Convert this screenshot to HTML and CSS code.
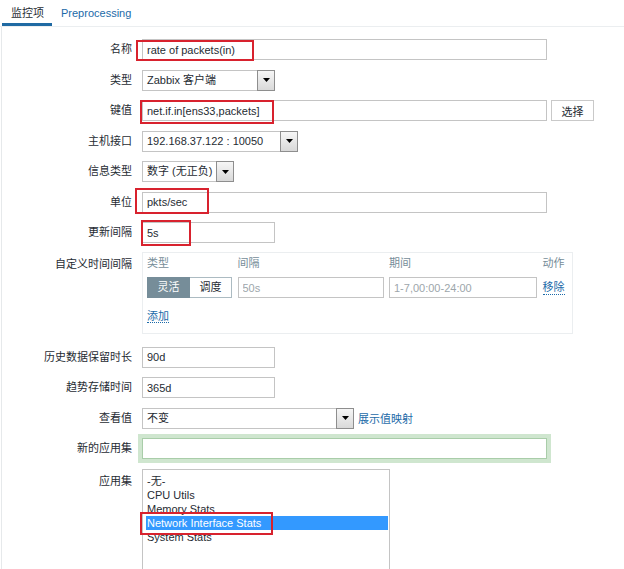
FILE: index.html
```html
<!DOCTYPE html>
<html lang="zh">
<head>
<meta charset="utf-8">
<title>监控项</title>
<link rel="stylesheet" href="styles.css">
</head>
<body>
<div class="tabs">
  <span class="tab active">监控项</span>
  <span class="tab">Preprocessing</span>
</div>
<div class="page">
  <div class="form">
    <label class="lbl">名称</label>
    <div class="field">
      <input class="text w-wide" value="rate of packets(in)">
      <span class="mark m-name"></span>
    </div>

    <label class="lbl">类型</label>
    <div class="field">
      <div class="select s-type"><span class="val">Zabbix 客户端</span><span class="arrow"><svg width="7" height="4" viewBox="0 0 7 4"><path d="M0 0h7L3.5 4z"/></svg></span></div>
    </div>

    <label class="lbl">键值</label>
    <div class="field">
      <input class="text w-wide" value="net.if.in[ens33,packets]">
      <button class="btn">选择</button>
      <span class="mark m-key"></span>
    </div>

    <label class="lbl">主机接口</label>
    <div class="field">
      <div class="select s-iface"><span class="val">192.168.37.122 : 10050</span><span class="arrow"><svg width="7" height="4" viewBox="0 0 7 4"><path d="M0 0h7L3.5 4z"/></svg></span></div>
    </div>

    <label class="lbl">信息类型</label>
    <div class="field">
      <div class="select s-info"><span class="val">数字 (无正负)</span><span class="arrow"><svg width="7" height="4" viewBox="0 0 7 4"><path d="M0 0h7L3.5 4z"/></svg></span></div>
    </div>

    <label class="lbl">单位</label>
    <div class="field">
      <input class="text w-wide" value="pkts/sec">
      <span class="mark m-unit"></span>
    </div>

    <label class="lbl">更新间隔</label>
    <div class="field">
      <input class="text w-short" value="5s">
      <span class="mark m-delay"></span>
    </div>

    <label class="lbl lbl-top">自定义时间间隔</label>
    <div class="field">
      <div class="intervals">
        <div class="iv-grid iv-head">
          <span>类型</span><span>间隔</span><span>期间</span><span>动作</span>
        </div>
        <div class="iv-grid iv-row">
          <div class="seg"><span class="seg-on">灵活</span><span class="seg-off">调度</span></div>
          <input class="text iv-int" placeholder="50s">
          <input class="text iv-per" placeholder="1-7,00:00-24:00">
          <a class="link">移除</a>
        </div>
        <div class="iv-add"><a class="link">添加</a></div>
      </div>
    </div>

    <label class="lbl">历史数据保留时长</label>
    <div class="field">
      <input class="text w-short" value="90d">
    </div>

    <label class="lbl">趋势存储时间</label>
    <div class="field">
      <input class="text w-short" value="365d">
    </div>

    <label class="lbl">查看值</label>
    <div class="field">
      <div class="select s-view"><span class="val">不变</span><span class="arrow"><svg width="7" height="4" viewBox="0 0 7 4"><path d="M0 0h7L3.5 4z"/></svg></span></div>
      <a class="plain-link">展示值映射</a>
    </div>

    <label class="lbl">新的应用集</label>
    <div class="field">
      <input class="text w-wide focus" value="">
    </div>

    <label class="lbl lbl-list">应用集</label>
    <div class="field">
      <div class="listbox">
        <div class="opt">-无-</div>
        <div class="opt">CPU Utils</div>
        <div class="opt">Memory Stats</div>
        <div class="opt sel">Network Interface Stats</div>
        <div class="opt">System Stats</div>
      </div>
      <span class="mark m-app"></span>
    </div>
  </div>
</div>
</body>
</html>
```
FILE: styles.css
```css
html, body {
  margin: 0;
  padding: 0;
  background: #fff;
}
body {
  font: 11px "Liberation Sans", Arial, "Noto Sans CJK SC", sans-serif;
  color: #1f2c33;
  overflow: hidden;
}

/* tabs */
.tabs {
  display: flex;
  padding-left: 2px;
  border-bottom: 1px solid #ebeef0;
}
.tab {
  padding: 6px 8px 3px 9px;
  line-height: 14px;
  border-bottom: 3px solid transparent;
  color: #1c6aa8;
}
.tab.active {
  color: #1f2c33;
  border-bottom-color: #1f6aa3;
}

/* page */
.page {
  margin-left: 1px;
  border-left: 1px solid #e6e9eb;
  padding-top: 12px;
  min-height: 600px;
}
.form {
  display: grid;
  grid-template-columns: 130px auto;
  column-gap: 10px;
  row-gap: 9.5px;
  align-items: start;
}
.lbl {
  text-align: right;
  line-height: 21px;
  white-space: nowrap;
}
.lbl-top { padding-top: 1px; }
.lbl-list { padding-top: 2px; }

.field {
  position: relative;
  display: flex;
  align-items: center;
}

/* controls */
.text {
  box-sizing: border-box;
  height: 21px;
  margin: 0;
  padding: 0 4px;
  border: 1px solid #c4c4c4;
  background: #fff;
  font: inherit;
  color: inherit;
  outline: none;
}
.text::placeholder {
  color: #9da6ab;
  opacity: 1;
}
.w-wide { width: 405px; }
.w-short { width: 133px; }

.focus {
  border-color: #a9cda9;
  box-shadow: 0 0 0 4px #cfe6cf;
}

.btn {
  box-sizing: border-box;
  margin: 0 0 0 4px;
  width: 43px;
  height: 21px;
  padding: 0;
  border: 1px solid #c9c9c9;
  background: #fff;
  font: inherit;
  color: #1f2c33;
}

.select {
  box-sizing: border-box;
  display: flex;
  height: 21px;
  border: 1px solid #c4c4c4;
  background: #fff;
}
.select .val {
  flex: 1;
  padding: 0 4px;
  line-height: 19px;
  white-space: nowrap;
  overflow: hidden;
}
.select .arrow {
  box-sizing: border-box;
  width: 18px;
  margin: -1px -1px -1px 0;
  border: 1px solid #8e8e8e;
  background: linear-gradient(#f6f6f6, #d9d9d9);
  display: flex;
  align-items: center;
  justify-content: center;
}
.select .arrow svg { fill: #000; }
.s-type { width: 133px; }
.s-iface { width: 156px; }
.s-info { width: 92px; }
.s-view { width: 212px; }

.plain-link {
  margin-left: 4px;
  color: #1c6aa8;
}

/* custom intervals */
.intervals {
  box-sizing: border-box;
  width: 431px;
  margin-top: -1px;
  margin-bottom: 3px;
  border: 1px solid #ebeef0;
  padding: 3px 8px 10px 4px;
}
.iv-grid {
  display: grid;
  grid-template-columns: 85px 146px 148px auto;
  column-gap: 5.5px;
  align-items: center;
  white-space: nowrap;
}
.iv-head {
  line-height: 14px;
  color: #768d99;
}
.iv-row {
  margin-top: 7.5px;
}
.seg {
  display: flex;
}
.seg span {
  box-sizing: border-box;
  height: 21px;
  line-height: 19px;
  text-align: center;
  border: 1px solid #acbbc2;
}
.seg-on {
  width: 43px;
  background: #768d99;
  border-color: #768d99 !important;
  color: #fff;
}
.seg-off {
  width: 42px;
  border-left: none !important;
  background: #fff;
  color: #1f2c33;
}
.iv-int { width: 146px; }
.iv-per { width: 148px; }
.link {
  color: #1c6aa8;
  border-bottom: 1px dotted #1c6aa8;
  line-height: 13px;
  justify-self: start;
  white-space: nowrap;
}
.iv-add {
  margin-top: 11px;
  line-height: 14px;
}

/* listbox */
.listbox {
  box-sizing: border-box;
  width: 248px;
  height: 110px;
  border: 1px solid #c4c4c4;
  padding: 4px 1px 0 3px;
  background: #fff;
}
.opt {
  line-height: 14px;
  padding-left: 1px;
  white-space: nowrap;
}
.opt.sel {
  background: #3399ff;
  color: #fff;
}

/* red annotation boxes */
.mark {
  position: absolute;
  box-sizing: border-box;
  border: 2px solid #d8222e;
  pointer-events: none;
}
.m-name { left: -6px; top: 1px; width: 118px; height: 21px; }
.m-key { left: -2px; top: 0; width: 134px; height: 24px; }
.m-unit { left: -7px; top: -4px; width: 74px; height: 26px; }
.m-delay { left: -1px; top: -2px; width: 50px; height: 26px; }
.m-app { left: -2px; top: 43px; width: 133px; height: 23px; }
```
